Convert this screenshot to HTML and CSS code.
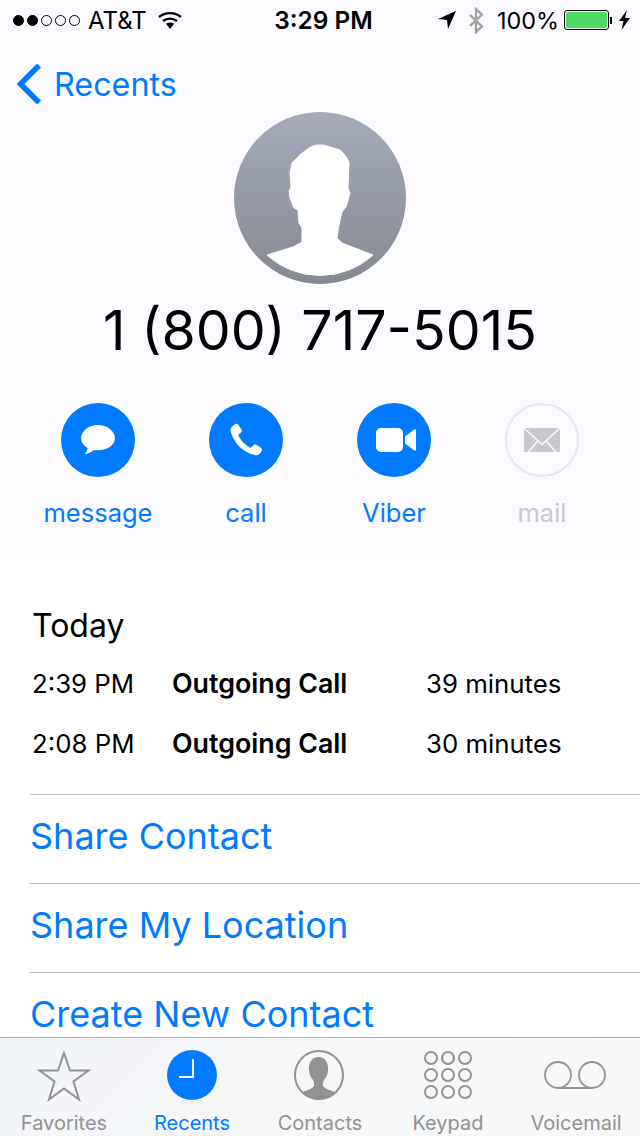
FILE: index.html
```html
<!DOCTYPE html>
<html>

<head>
  <title>Recents - Details</title>
  <link rel="stylesheet" href="styles.css">
</head>

<body>
  <div id="phone">
    <div id="top">
      <div class="status">
        <div class="status-left">
          <span class="dot on"></span><span class="dot on"></span><span class="dot"></span><span class="dot"></span><span class="dot"></span>
          <span class="carrier">AT&amp;T</span>
          <svg class="wifi" width="24" height="18" viewBox="0 0 24 18">
            <path d="M1 6C7.500 .8 16.500 .8 23 6" fill="none" stroke="#000" stroke-width="2.4"/>
            <path d="M5 10C9 6.800 15 6.800 19 10" fill="none" stroke="#000" stroke-width="2.4"/>
            <path d="M8 12.800C10.500 11 13.500 11 16 12.800L12 18Z" fill="#000"/>
          </svg>
        </div>
        <div class="status-time">3:29 PM</div>
        <div class="status-right">
          <svg width="18" height="18" viewBox="0 0 18 18"><path d="M18 0L10 18 9 9 0 8Z" fill="#000"/></svg>
          <svg class="bt" width="16" height="27" viewBox="0 0 16 27"><path d="M2 8L14 19.500 8 25V2L14 7.500 2 19" fill="none" stroke="#a3a3a3" stroke-width="2.400"/></svg>
          <span class="pct">100%</span>
          <div class="battery"><div class="battery-fill"></div></div>
          <div class="battery-cap"></div>
          <svg class="bolt" width="11" height="20" viewBox="0 0 11 20"><path d="M8 0L0 11H4.500L2.500 20 11 8H6Z" fill="#000"/></svg>
        </div>
      </div>

      <div class="nav">
        <svg width="26" height="42" viewBox="0 0 26 42"><path d="M23 2.500L4.500 21 23 39.500" fill="none" stroke="#007aff" stroke-width="5.500"/></svg>
        <span class="nav-label">Recents</span>
      </div>

      <svg class="avatar" width="172" height="172" viewBox="0 0 172 172">
        <defs>
          <linearGradient id="avatar-bg" x1="0" y1="0" x2="0" y2="1">
            <stop offset="0" stop-color="#a5abb9"/>
            <stop offset="1" stop-color="#858a94"/>
          </linearGradient>
        </defs>
        <circle cx="86" cy="86" r="86" fill="url(#avatar-bg)"/>
        <path fill="#fff" stroke="#fff" stroke-linejoin="round" d="M33 143L59 135 68 130 68 116 65 111 64 98 60 96 56 86 55 79 57 76 56 61 58 51 66 43C72 38 78 33 84 33C88 33 90 33 93 34L106 38C110 42 114 46 115 51L114 76 116 81 112 95 108 100 105 113 103 126 108 131 139 143A79 79 0 0 1 33 143Z"/>
      </svg>

      <div class="number">1 (800) 717-5015</div>

      <div class="actions">
        <div class="action">
          <div class="circle">
            <svg width="36" height="32" viewBox="0 0 38 34"><path fill="#fff" d="M19 1C29 1 37 7.500 37 15C37 22.500 29 28 19 28C17 28 15.500 27.900 14.500 27.500C12 30 8.500 31.300 4.500 32C6.500 30.500 7.500 28.500 8 25.500C3.500 23 1 19.500 1 15C1 7.500 9 1 19 1Z"/></svg>
          </div>
          <span class="action-label">message</span>
        </div>
        <div class="action">
          <div class="circle">
            <svg width="34" height="34" viewBox="0 0 34 34"><path fill="#fff" d="M6.500 1C7.500.4 8.500.6 9.200 1.500L12.500 6.500C13.200 7.600 13 8.800 12 9.600L9.900 11.300C9.400 11.800 9.300 12.400 9.600 13C11.800 17.500 15.800 21.900 20.900 24.500C21.500 24.800 22.100 24.600 22.500 24.100L24.300 22.200C25.100 21.300 26.200 21.200 27.200 21.800L32.200 25C33.100 25.700 33.300 26.700 32.800 27.700C31.500 30.500 29 32.800 26.500 32.300C14 30 4 19 1.500 8C1 5 3.500 2.500 6.500 1Z"/></svg>
          </div>
          <span class="action-label">call</span>
        </div>
        <div class="action">
          <div class="circle">
            <svg class="video" width="40" height="24" viewBox="0 0 40 24"><rect width="27" height="24" rx="5" fill="#fff"/><path fill="#fff" d="M29 8.500L38.500 1.500C39.200 1 40 1.300 40 2.200V21.800C40 22.700 39.200 23 38.500 22.500L29 15.500Z"/></svg>
          </div>
          <span class="action-label">Viber</span>
        </div>
        <div class="action off">
          <div class="circle">
            <svg width="36" height="24" viewBox="0 0 36 24">
              <rect width="36" height="24" fill="#c8c8cd"/>
              <path d="M0 0L18 16.500 36 0M4 24L14 13M32 24L22 13" fill="none" stroke="#fbfbff" stroke-width="1.500"/>
            </svg>
          </div>
          <span class="action-label">mail</span>
        </div>
      </div>
    </div>

    <div id="detail">
      <div class="day">Today</div>
      <div class="call-row"><span class="call-time">2:39 PM</span><b class="call-type">Outgoing Call</b><span>39 minutes</span></div>
      <div class="call-row"><span class="call-time">2:08 PM</span><b class="call-type">Outgoing Call</b><span>30 minutes</span></div>

      <div class="links">
        <div class="link">Share Contact</div>
        <div class="link">Share My Location</div>
        <div class="link">Create New Contact</div>
      </div>
    </div>

    <div id="tabs">
      <div class="tab">
        <svg width="56" height="52" viewBox="0 0 56 52"><path d="M28 3L34 20.500H52.500L37.500 31.500 43 49.500 28 38.500 13 49.500 18.500 31.500 3.500 20.500H22Z" fill="none" stroke="#929292" stroke-width="2"/></svg>
        <span>Favorites</span>
      </div>
      <div class="tab active">
        <svg width="50" height="50" viewBox="0 0 50 50"><circle cx="25" cy="25" r="25" fill="#007aff"/><path d="M26 9V27H12" fill="none" stroke="#fff" stroke-width="2"/></svg>
        <span>Recents</span>
      </div>
      <div class="tab">
        <svg class="contacts-icon" width="50" height="50" viewBox="0 0 50 50">
          <circle cx="25" cy="25" r="24" fill="none" stroke="#929292" stroke-width="2"/>
          <path fill="#929292" d="M9 42C13 40 18 39 20 36C20.500 34 20 32 19 30C17 28 15.500 25 15 21C14 13 18 7 24.500 7C31 7 35 13 34 21C33.500 25 32 28 30 30C29 32 28.500 34 29 36C31 39 36 40 41 42C37 47 31 49.500 25 49.500C19 49.500 13 47 9 42Z"/>
        </svg>
        <span>Contacts</span>
      </div>
      <div class="tab">
        <svg width="50" height="50" viewBox="0 0 50 50" fill="none" stroke="#929292" stroke-width="2">
          <circle cx="8" cy="8" r="6"/><circle cx="25" cy="8" r="6"/><circle cx="42" cy="8" r="6"/>
          <circle cx="8" cy="25" r="6"/><circle cx="25" cy="25" r="6"/><circle cx="42" cy="25" r="6"/>
          <circle cx="8" cy="42" r="6"/><circle cx="25" cy="42" r="6"/><circle cx="42" cy="42" r="6"/>
        </svg>
        <span>Keypad</span>
      </div>
      <div class="tab">
        <svg class="voicemail-icon" width="64" height="50" viewBox="0 0 64 50" fill="none" stroke="#929292" stroke-width="1.800">
          <circle cx="15" cy="25" r="13"/><circle cx="49" cy="25" r="13"/><path d="M15 38H49"/>
        </svg>
        <span>Voicemail</span>
      </div>
    </div>
  </div>
</body>

</html>
```

FILE: styles.css
```css
* {
box-sizing: border-box;
}

body {
font-family: Inter, "Noto Sans", sans-serif;
margin: 0;
background-color: #fff;
}

#phone {
width: 640px;
height: 1136px;
display: flex;
flex-direction: column;
overflow: hidden;
}

#top {
height: 559px;
flex-shrink: 0;
background-color: #fbfbff;
display: flex;
flex-direction: column;
align-items: center;
}

.status {
width: 100%;
height: 40px;
padding: 0 10px 0 13px;
display: flex;
align-items: center;
justify-content: space-between;
color: #000;
font-size: 24px;
}

.status-left,
.status-right {
width: 205px;
display: flex;
align-items: center;
}

.status-right {
justify-content: flex-end;
}

.dot {
width: 11px;
height: 11px;
margin-right: 3px;
border: 1px solid #000;
border-radius: 50%;
}

.dot.on {
background-color: #000;
}

.carrier {
margin-left: 5px;
}

.wifi {
margin-left: 11px;
}

.status-time {
margin-left: 4px;
font-weight: 600;
font-size: 24.4px;
}

.bt {
margin-left: 12px;
}

.pct {
margin-left: 13px;
margin-right: 5px;
font-size: 23.4px;
}

.battery {
width: 45px;
height: 20px;
border: 1px solid #000;
border-radius: 3px;
padding: 1px;
}

.battery-fill {
height: 100%;
background-color: #4cd964;
border-radius: 2px;
}

.battery-cap {
width: 2px;
height: 7px;
background-color: #000;
margin-left: 1px;
}

.bolt {
margin-left: 7px;
}

.nav {
width: 100%;
height: 72px;
padding: 16px 0 0 16px;
display: flex;
align-items: center;
gap: 12px;
color: #007aff;
font-size: 32.3px;
}

.avatar {
flex-shrink: 0;
}

.number {
margin-top: 12px;
font-size: 55.4px;
line-height: 68px;
color: #000;
}

.actions {
margin-top: 39px;
display: flex;
}

.action {
width: 148px;
display: flex;
flex-direction: column;
align-items: center;
}

.circle {
width: 74px;
height: 74px;
border-radius: 50%;
background-color: #007aff;
display: flex;
align-items: center;
justify-content: center;
}

.video {
margin-left: 3px;
}

.action-label {
margin-top: 18px;
font-size: 25.5px;
line-height: 36px;
color: #007aff;
}

.action.off .circle {
background-color: transparent;
border: 2px solid #e8e8ea;
}

.action.off .action-label {
color: #c8c8cd;
}

#detail {
flex: 1;
min-height: 0;
padding: 45px 0 0 30px;
overflow: hidden;
background-color: #fff;
color: #000;
}

.day {
padding-left: 2px;
font-size: 32px;
line-height: 44px;
}

.call-row {
height: 60px;
padding-left: 2px;
display: flex;
align-items: center;
font-size: 25.8px;
}

.day + .call-row {
margin-top: 5px;
}

.call-time {
width: 140px;
}

.call-type {
width: 254px;
font-size: 26.8px;
font-weight: 600;
}

.links {
margin-top: 21px;
}

.link {
height: 89px;
padding-top: 19px;
border-top: 1px solid #bcbbc1;
color: #007aff;
font-size: 36px;
line-height: 44px;
}

.link:last-child {
height: 64px;
}

#tabs {
height: 99px;
flex-shrink: 0;
border-top: 1px solid #b2b2b2;
background: linear-gradient(135deg, #f2f5f8, #f8f8f8);
display: flex;
}

.tab {
flex: 1;
padding-top: 12px;
padding-bottom: 1px;
display: flex;
flex-direction: column;
align-items: center;
justify-content: space-between;
color: #929292;
font-size: 20px;
line-height: 24px;
}

.tab.active {
color: #007aff;
}

.contacts-icon {
margin-right: 2px;
}

.voicemail-icon {
margin-right: 2px;
}
```
